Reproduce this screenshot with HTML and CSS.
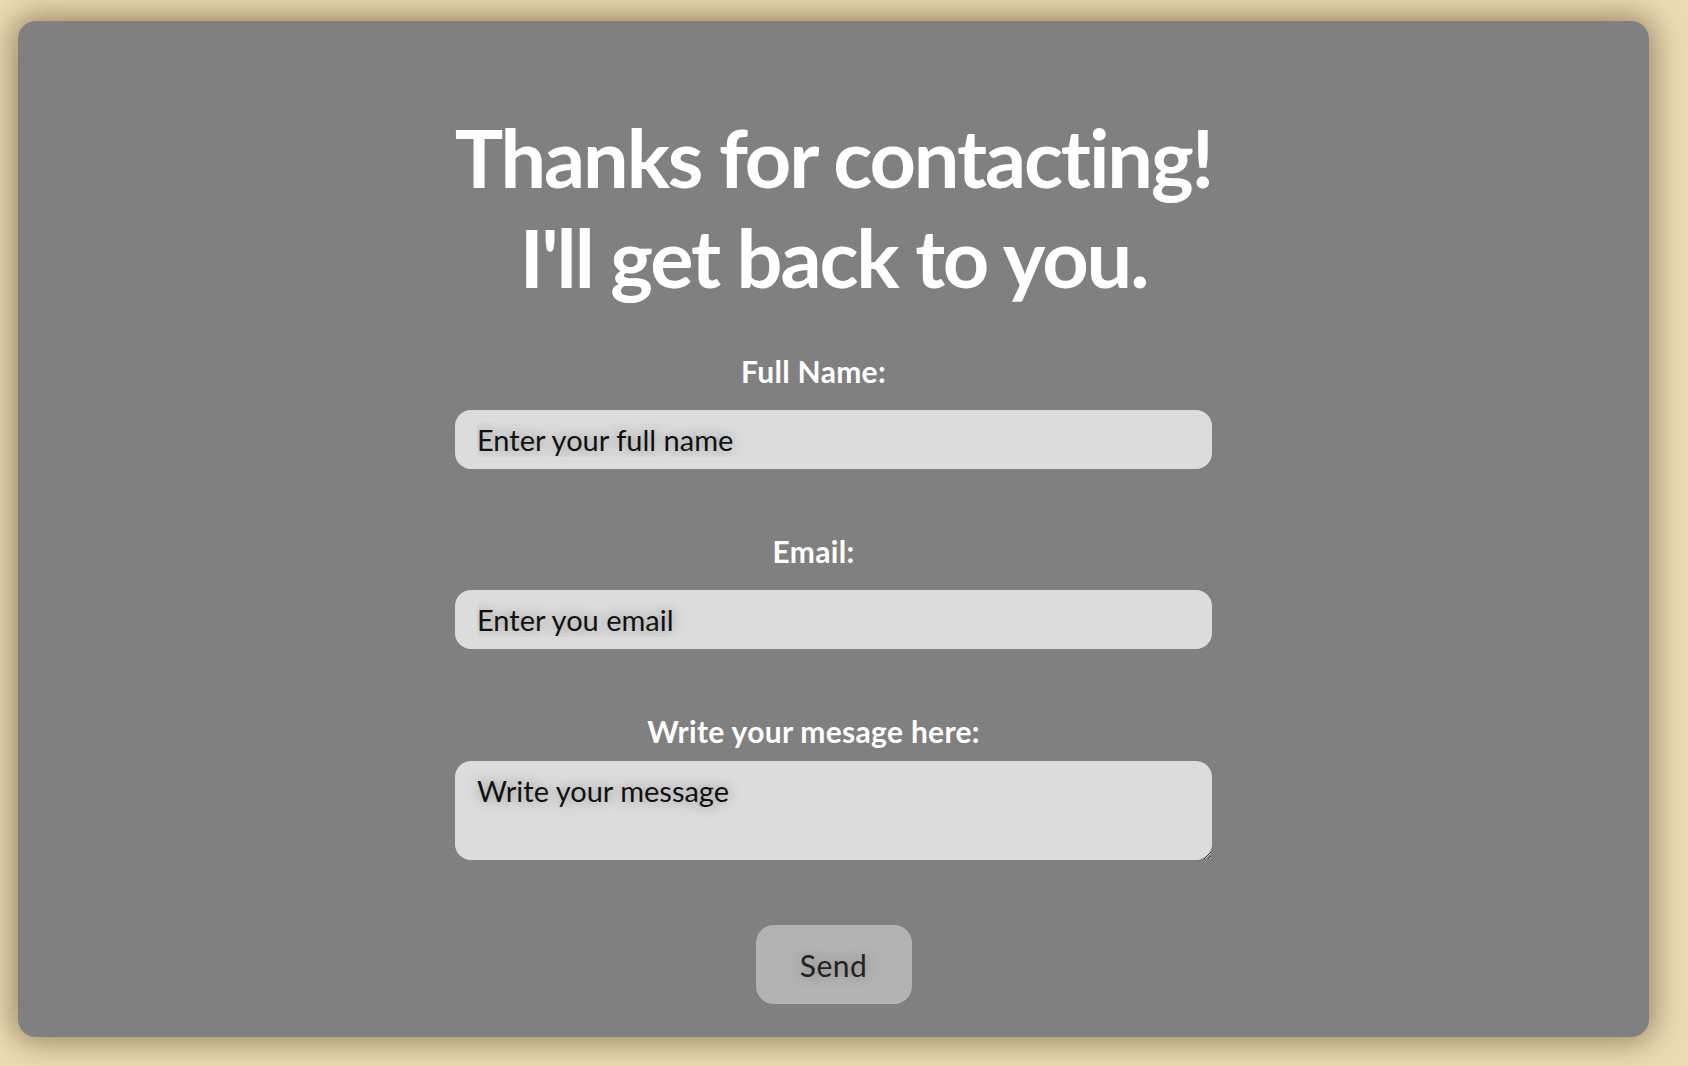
FILE: index.html
```html
<!DOCTYPE html>
<html lang="en">
<head>
<meta charset="utf-8">
<title>Contact</title>
<link rel="stylesheet" href="styles.css">
</head>
<body>
<main class="card">
  <h1 class="title">Thanks for contacting!<br>I'll get back to you.</h1>
  <form class="form">
    <label class="label" for="name">Full Name:</label>
    <input class="field" id="name" type="text" placeholder="Enter your full name">
    <label class="label" for="email">Email:</label>
    <input class="field" id="email" type="email" placeholder="Enter you email">
    <label class="label label-tight" for="msg">Write your mesage here:</label>
    <textarea class="field area" id="msg" placeholder="Write your message"></textarea>
    <button class="send" type="button">Send</button>
  </form>
</main>
</body>
</html>
```

FILE: styles.css
```css
html, body {
  height: 100%;
}
body {
  margin: 0;
  box-sizing: border-box;
  padding: 21px 39px 29px 18px;
  background: #ecdcb6;
  display: flex;
  font-family: Lato, "Noto Sans", sans-serif;
}
.card {
  flex: 1;
  background: #808080;
  border-radius: 18px;
  box-shadow: 0 0 30px 6px rgba(90, 70, 30, 0.55);
  display: flex;
  flex-direction: column;
  align-items: center;
}
.title {
  margin: 86px 0 0;
  color: #fff;
  font-size: 81px;
  line-height: 100px;
  font-weight: 700;
  letter-spacing: -2.1px;
  text-align: center;
}
.form {
  width: 757px;
  display: flex;
  flex-direction: column;
  margin-top: 46px;
}
.label {
  color: #fff;
  font-size: 30px;
  font-weight: 700;
  letter-spacing: 0.3px;
  text-align: center;
  padding-right: 40px;
  line-height: 36px;
  margin-bottom: 21px;
}
.label-tight {
  margin-bottom: 12px;
}
.field {
  box-sizing: border-box;
  height: 59px;
  border: none;
  border-radius: 16px;
  background: #dcdcdc;
  padding: 0 22px;
  font-family: Lato, "Noto Sans", sans-serif;
  font-size: 29px;
  color: #111;
  margin-bottom: 64px;
  outline: none;
}
.field::placeholder {
  color: #111;
  opacity: 1;
  text-shadow: 0 0 14px rgba(0, 0, 0, 0.38);
}
.area {
  height: 99px;
  padding-top: 12px;
  margin-bottom: 65px;
  resize: vertical;
}
.send {
  align-self: center;
  width: 156px;
  height: 79px;
  border: none;
  border-radius: 18px;
  background: #b3b3b3;
  color: #222;
  font-family: Lato, "Noto Sans", sans-serif;
  font-size: 30px;
  letter-spacing: 0.5px;
  text-shadow: 0 0 14px rgba(0, 0, 0, 0.3);
}
```
